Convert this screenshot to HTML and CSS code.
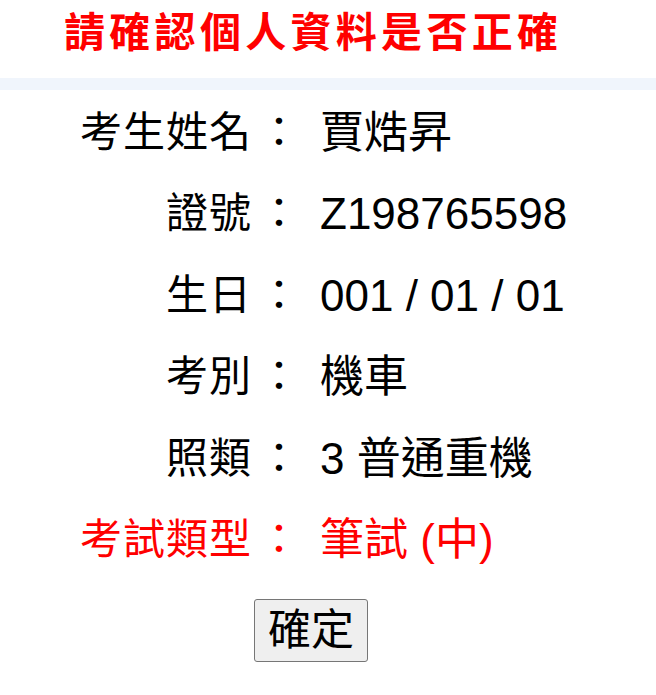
FILE: index.html
```html
<!DOCTYPE html>
<html lang="zh-Hant">
<head>
<meta charset="utf-8">
<title>請確認個人資料是否正確</title>
<link rel="stylesheet" href="styles.css">
</head>
<body>
<header class="head">
  <h1 class="title">請確認個人資料是否正確</h1>
</header>
<div class="bar"></div>
<main class="info">
  <div class="label">考生姓名<span class="colon">：</span></div><div class="value">賈焅昇</div>
  <div class="label">證號<span class="colon">：</span></div><div class="value">Z198765598</div>
  <div class="label">生日<span class="colon">：</span></div><div class="value">001 / 01 / 01</div>
  <div class="label">考別<span class="colon">：</span></div><div class="value">機車</div>
  <div class="label">照類<span class="colon">：</span></div><div class="value">3 普通重機</div>
  <div class="label red">考試類型<span class="colon">：</span></div><div class="value red">筆試 (中)</div>
</main>
<div class="actions">
  <button class="btn" type="button">確定</button>
</div>
</body>
</html>
```

FILE: styles.css
```css
html, body {
  margin: 0;
  padding: 0;
  background: #ffffff;
}
body {
  font-family: "Liberation Sans", "Noto Sans CJK TC", sans-serif;
  color: #000;
}
.head {
  height: 78px;
  display: flex;
  align-items: center;
  padding-left: 64px;
  box-sizing: border-box;
}
.title {
  margin: 0;
  margin-top: -12px;
  font-size: 41px;
  font-weight: bold;
  color: #ff0000;
  line-height: 50px;
  letter-spacing: 4.3px;
}
.bar {
  height: 12px;
  background: #f0f5fc;
}
.info {
  display: grid;
  grid-template-columns: 300px auto;
  grid-auto-rows: 81.5px;
  column-gap: 20px;
  padding-top: 2px;
  align-items: center;
}
.label {
  text-align: right;
  font-size: 42px;
  line-height: 50px;
  letter-spacing: 1px;
}
.colon {
  padding-left: 6px;
  letter-spacing: 0;
}
.value {
  font-size: 44px;
  line-height: 50px;
}
.red {
  color: #ff0000;
}
.actions {
  display: flex;
  padding-left: 254px;
  padding-top: 18px;
}
.btn {
  font-family: "Liberation Sans", "Noto Sans CJK TC", sans-serif;
  font-size: 43px;
  width: 114px;
  height: 63px;
  padding: 0;
  line-height: 1;
  color: #000;
  background: #efefef;
  border: 1px solid #767676;
  border-radius: 3px;
}
```
